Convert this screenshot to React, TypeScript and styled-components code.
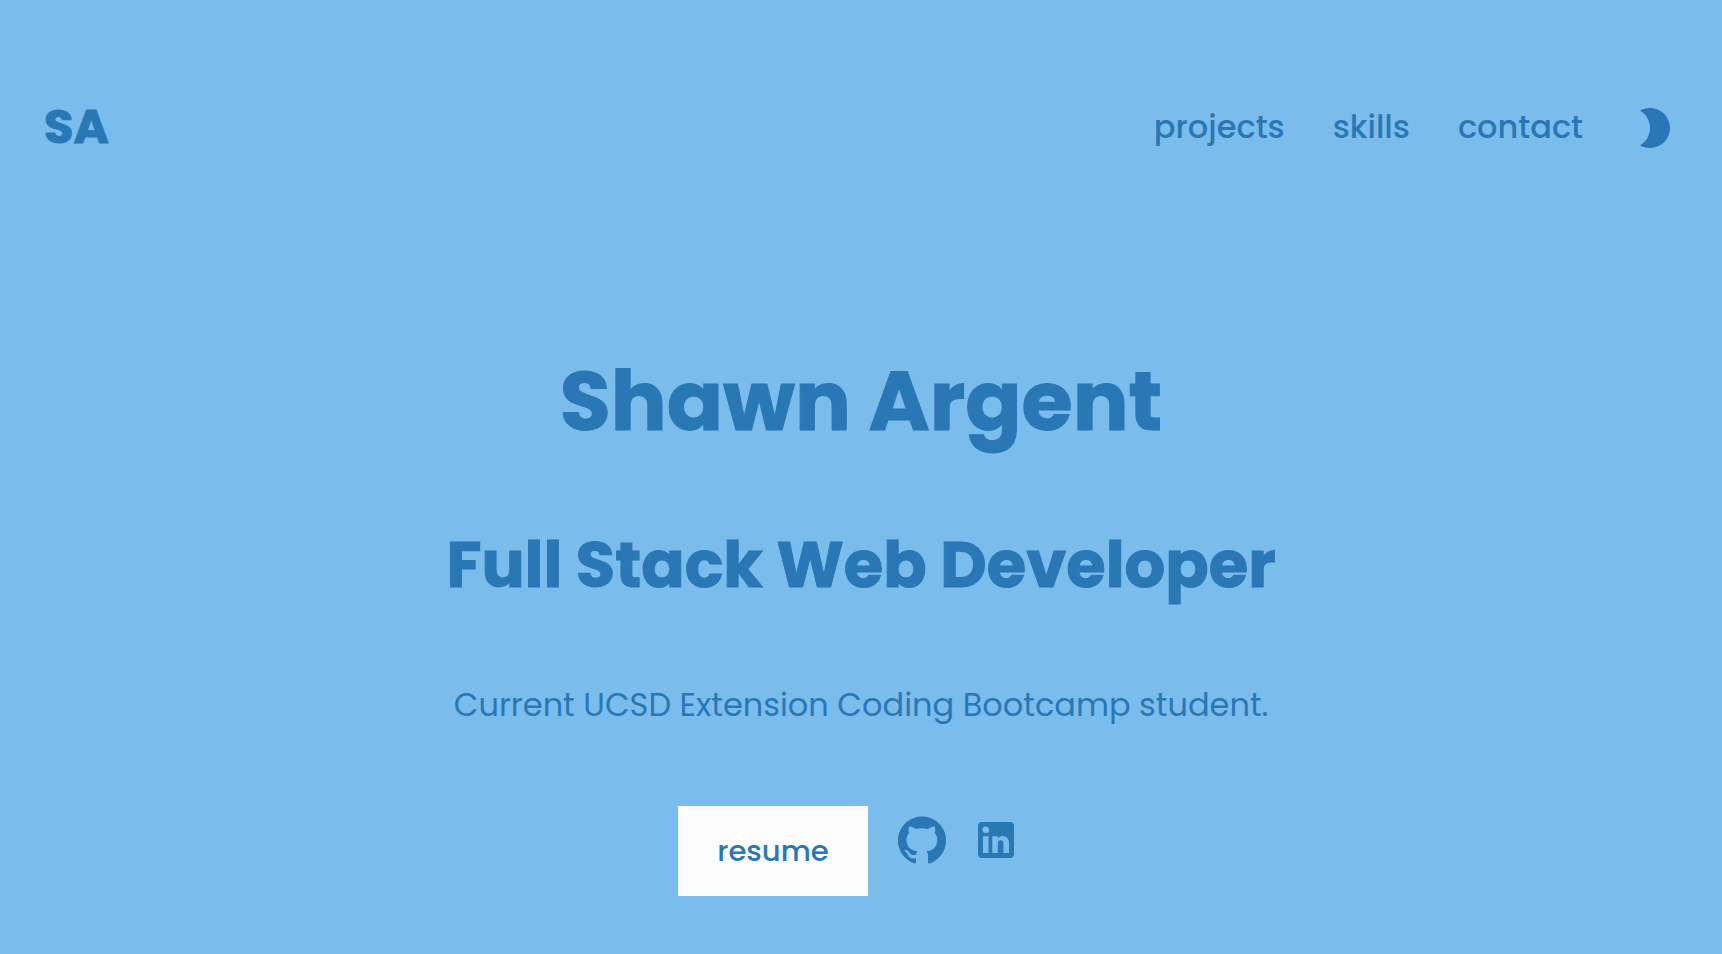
import React from "react";
import styled, { createGlobalStyle } from "styled-components";

const primary = "#2978b5";
const background = "#7abded";

const GlobalStyle = createGlobalStyle`
  * { box-sizing: border-box; }
  body {
    margin: 0;
    background: ${background};
    color: ${primary};
    font-family: Poppins, Inter, "Open Sans", sans-serif;
  }
`;

const Page = styled.div`
  min-height: 100vh;
  padding: 91px 44px 56px;
`;

const Header = styled.header`
  display: flex;
  align-items: center;
  justify-content: space-between;
  height: 72px;
`;

const Brand = styled.a`
  color: inherit;
  font-size: 48px;
  font-weight: 700;
  -webkit-text-stroke: 1px currentColor;
  line-height: 72px;
  text-decoration: none;
`;

const Nav = styled.nav`
  display: flex;
  align-items: center;
  gap: 47px;
`;

const NavList = styled.ul`
  display: flex;
  gap: 48px;
  margin: 0;
  padding: 0;
  list-style: none;
`;

const NavLink = styled.a`
  color: inherit;
  font-size: 32px;
  font-weight: 500;
  line-height: 48px;
  text-decoration: none;
`;

const ThemeButton = styled.button`
  display: flex;
  margin-top: 2px;
  padding: 0;
  border: 0;
  background: transparent;
  color: inherit;
  cursor: pointer;
`;

const Hero = styled.main`
  display: flex;
  flex-direction: column;
  align-items: center;
  padding-top: 190px;
  text-align: center;
`;

const Name = styled.h1`
  margin: 0;
  font-size: 83px;
  font-weight: 700;
  -webkit-text-stroke: 1px currentColor;
  line-height: 96px;
`;

const Role = styled.h2`
  margin: 80px 0 0;
  font-size: 64px;
  font-weight: 700;
  -webkit-text-stroke: 1px currentColor;
  line-height: 72px;
`;

const Summary = styled.p`
  margin: 80px 0 0;
  font-size: 32px;
  line-height: 48px;
`;

const Actions = styled.div`
  display: flex;
  align-items: flex-start;
  margin-top: 77px;
  padding-right: 24px;
`;

const ResumeLink = styled.a`
  width: 190px;
  margin-right: 30px;
  background: #fcfcfc;
  color: inherit;
  font-size: 29px;
  font-weight: 500;
  line-height: 90px;
  text-align: center;
  text-decoration: none;
`;

const SocialLinks = styled.div`
  display: flex;
  gap: 26px;
  padding-top: 10px;
`;

const SocialLink = styled.a`
  display: flex;
  color: inherit;
`;

const Icon = ({ path }: { path: string }) => (
  <svg width="48" height="48" viewBox="0 0 24 24" fill="currentColor" aria-hidden="true">
    <path d={path} />
  </svg>
);

const moon =
  "M10 2c-1.82 0-3.53.5-5 1.35C7.99 5.08 10 8.3 10 12s-2.01 6.92-5 8.65C6.47 21.5 8.18 22 10 22c5.52 0 10-4.48 10-10S15.52 2 10 2z";
const github =
  "M12 .3a12 12 0 0 0-3.8 23.4c.6.1.8-.3.8-.6v-2c-3.3.7-4-1.6-4-1.6-.6-1.4-1.4-1.8-1.4-1.8-1-.7.1-.7.1-.7 1.2 0 1.9 1.2 1.9 1.2 1 1.8 2.8 1.3 3.5 1 0-.8.4-1.3.7-1.6-2.7-.3-5.5-1.3-5.5-6 0-1.2.5-2.3 1.3-3.1-.2-.4-.6-1.6 0-3.2 0 0 1-.3 3.4 1.2a11.5 11.5 0 0 1 6 0c2.3-1.5 3.3-1.2 3.3-1.2.6 1.6.2 2.8 0 3.2.9.8 1.3 1.9 1.3 3.2 0 4.6-2.8 5.6-5.5 5.9.5.4.9 1 .9 2.2v3.3c0 .3.1.7.8.6A12 12 0 0 0 12 .3";
const linkedin =
  "M19 3a2 2 0 0 1 2 2v14a2 2 0 0 1-2 2H5a2 2 0 0 1-2-2V5a2 2 0 0 1 2-2h14m-.5 15.5v-5.3a3.26 3.26 0 0 0-3.26-3.26c-.85 0-1.84.52-2.32 1.3v-1.11h-2.79v8.37h2.79v-4.93c0-.77.62-1.4 1.39-1.4a1.4 1.4 0 0 1 1.4 1.4v4.93h2.79M6.88 8.56a1.68 1.68 0 0 0 1.68-1.68c0-.93-.75-1.69-1.68-1.69a1.69 1.69 0 0 0-1.69 1.69c0 .93.76 1.68 1.69 1.68m1.39 9.94v-8.37H5.5v8.37h2.77z";

const sections = ["projects", "skills", "contact"];

export default function App() {
  return (
    <Page>
      <GlobalStyle />
      <Header>
        <Brand href="#">SA</Brand>
        <Nav>
          <NavList>
            {sections.map((section) => (
              <li key={section}>
                <NavLink href={`#${section}`}>{section}</NavLink>
              </li>
            ))}
          </NavList>
          <ThemeButton type="button" aria-label="toggle theme">
            <Icon path={moon} />
          </ThemeButton>
        </Nav>
      </Header>
      <Hero>
        <Name>Shawn Argent</Name>
        <Role>Full Stack Web Developer</Role>
        <Summary>Current UCSD Extension Coding Bootcamp student.</Summary>
        <Actions>
          <ResumeLink href="#resume">resume</ResumeLink>
          <SocialLinks>
            <SocialLink href="#github" aria-label="github">
              <Icon path={github} />
            </SocialLink>
            <SocialLink href="#linkedin" aria-label="linkedin">
              <Icon path={linkedin} />
            </SocialLink>
          </SocialLinks>
        </Actions>
      </Hero>
    </Page>
  );
}
